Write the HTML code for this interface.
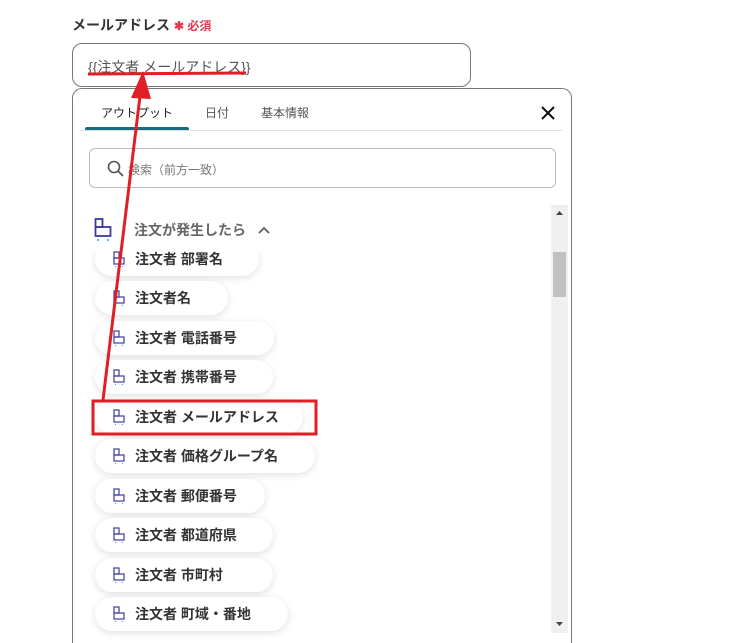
<!DOCTYPE html>
<html style="width:738px;height:643px;overflow:hidden"><head><meta charset="utf-8"><style>
*{box-sizing:border-box;margin:0;padding:0}
body{width:738px;height:643px;background:#fff;position:relative;overflow:hidden;font-family:"Liberation Sans","Noto Sans CJK JP",sans-serif;color:#333}
.abs{position:absolute}
.lbl{left:72px;top:15px;font-size:14px;font-weight:bold;color:#333}
.lbl span{color:#e8374c;font-size:12px;margin-left:4px}
.inp{left:72px;top:43px;width:399px;height:44px;border:1px solid #777;border-radius:10px}
.inp div{position:absolute;left:15px;top:13px;font-size:14px;color:#555}
.panel{left:72px;top:88px;width:500px;height:555px;border:1px solid #777;border-bottom:none;border-radius:10px 10px 0 0;background:#fff}
.tab{top:104px;font-size:12px;color:#555}
.sb{left:89px;top:148px;width:467px;height:40px;border:1px solid #bbb;border-radius:6px}
.pill{left:95px;height:34px;border-radius:17px;background:#fff;box-shadow:0 2px 8px rgba(0,0,0,.12);font-size:14px;font-weight:bold;color:#333;padding-left:40px;line-height:35px}
</style></head><body>
<div class="abs lbl">メールアドレス<span>✱ 必須</span></div>
<div class="abs inp"><div>{{注文者 メールアドレス}}</div></div>
<div class="abs panel"></div>
<div class="abs tab" style="left:101px;color:#222">アウトプット</div>
<div class="abs tab" style="left:205px">日付</div>
<div class="abs tab" style="left:261px">基本情報</div>
<div class="abs" style="left:85px;top:127px;width:104px;height:4px;background:#1a6a80;border-radius:2px 2px 0 0"></div>
<div class="abs" style="left:80px;top:130px;width:482px;height:1px;background:#e0e0e0"></div>
<svg class="abs" style="left:540px;top:105px" width="16" height="16"><path d="M2 2L14 14M14 2L2 14" stroke="#111" stroke-width="2"/></svg>
<div class="abs sb"><svg style="position:absolute;left:17px;top:11px" width="18" height="18"><circle cx="7" cy="7" r="5.5" fill="none" stroke="#555" stroke-width="1.6"/><path d="M11 11L16 16" stroke="#555" stroke-width="1.8"/></svg><span style="position:absolute;left:38px;top:12px;font-size:12px;color:#777">検索（前方一致）</span></div>
<svg class="abs" style="left:94px;top:218px" width="20" height="24"><rect x="1.5" y="1" width="7" height="8" fill="none" stroke="#3a3a9a" stroke-width="1.8"/><rect x="1.5" y="9" width="15" height="9" fill="none" stroke="#3a3a9a" stroke-width="1.8"/><circle cx="4" cy="22" r="1" fill="#3b9be8"/><circle cx="14" cy="22" r="1" fill="#3b9be8"/></svg>
<div class="abs" style="left:134px;top:220px;font-size:14px;font-weight:bold;color:#666">注文が発生したら</div>
<svg class="abs" style="left:258px;top:226px" width="12" height="8"><path d="M1 7L6 2L11 7" fill="none" stroke="#555" stroke-width="1.6"/></svg>
<div class="abs" style="left:80px;top:244px;width:470px;height:399px;overflow:hidden">
<div style="position:relative;left:-80px;top:-244px">
<div class="abs pill" style="top:242px;width:164px">注文者 部署名</div>
<div class="abs" style="left:80px;top:240px;width:470px;height:11px;background:#fff"></div>
<div class="abs pill" style="top:281px;width:133px">注文者名</div>
<div class="abs pill" style="top:321px;width:179px">注文者 電話番号</div>
<div class="abs pill" style="top:360px;width:178px">注文者 携帯番号</div>
<div class="abs pill" style="top:400px;width:208px">注文者 メールアドレス</div>
<div class="abs pill" style="top:439px;width:220px">注文者 価格グループ名</div>
<div class="abs pill" style="top:479px;width:170px">注文者 郵便番号</div>
<div class="abs pill" style="top:518px;width:178px">注文者 都道府県</div>
<div class="abs pill" style="top:558px;width:178px">注文者 市町村</div>
<div class="abs pill" style="top:597px;width:193px">注文者 町域・番地</div>
</div></div>
<svg class="abs" style="left:0;top:0;pointer-events:none" width="738" height="643">
<defs><g id="ic"><rect x="0" y="0" width="5" height="6" fill="none" stroke="#4a4aa8" stroke-width="1.3"/><rect x="0" y="6" width="10" height="6" fill="none" stroke="#4a4aa8" stroke-width="1.3"/><circle cx="1.5" cy="14.5" r=".6" fill="#3b9be8"/><circle cx="8.5" cy="14.5" r=".6" fill="#3b9be8"/></g></defs>
<use href="#ic" x="114" y="252"/><use href="#ic" x="114" y="291"/><use href="#ic" x="114" y="331"/><use href="#ic" x="114" y="370"/><use href="#ic" x="114" y="410"/><use href="#ic" x="114" y="449"/><use href="#ic" x="114" y="489"/><use href="#ic" x="114" y="528"/><use href="#ic" x="114" y="568"/><use href="#ic" x="114" y="607"/>
<rect x="551" y="205" width="17" height="428" fill="#f0f0f0"/>
<rect x="553" y="252" width="13" height="45" fill="#c1c1c1"/>
<path d="M556 215L559.5 211L563 215Z" fill="#444"/><path d="M556 622L559.5 626L563 622Z" fill="#444"/>
<rect x="93" y="401" width="223" height="33" fill="none" stroke="#e01e25" stroke-width="3"/>
<path d="M88 74L246 73" stroke="#e01e25" stroke-width="3"/>
<path d="M103 400L141 88" stroke="#e01e25" stroke-width="3"/>
<path d="M143 71L131 98L151 99Z" fill="#e01e25"/>
</svg>
</body></html>
